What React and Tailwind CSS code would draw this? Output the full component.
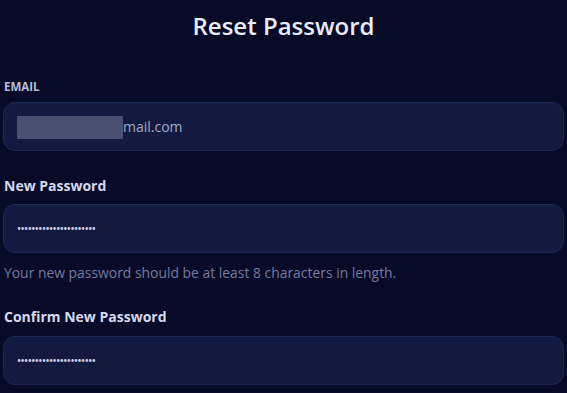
const font = { fontFamily: '"Open Sans", "Noto Sans", sans-serif' };

const Field = ({ children }) => (
    <div className="h-[49px] rounded-[12px] border border-[#1e2656] bg-[#141a3f] flex items-center px-[13px]">
        {children}
    </div>
);

const Dots = () => (
    <span
        className="text-[#c9cde6] text-[7px] tracking-[-0.5px] leading-none"
        style={{ fontFamily: 'Lato, sans-serif' }}
    >
        ••••••••••••••••••••••
    </span>
);

export default function App() {
    return (
        <div className="min-h-screen bg-[#070b27] px-[3px] pt-[10px]" style={font}>
            <h1 className="text-center text-[24px] leading-[32px] font-semibold text-[#e9ebf7]">
                Reset Password
            </h1>

            <label className="block mt-[38px] px-px text-[11.5px] leading-[14px] font-bold text-[#b9bfdc]">
                EMAIL
            </label>
            <div className="mt-[8px]">
                <Field>
                    <span className="w-[106px] h-[23px] bg-[#4a4f72] mt-[2px]" />
                    <span className="text-[14px] text-[#a3a9c7]">mail.com</span>
                </Field>
            </div>

            <label className="block mt-[26px] px-px text-[14px] leading-[18px] font-bold text-[#d5d9ee]">
                New Password
            </label>
            <div className="mt-[9px]">
                <Field>
                    <Dots />
                </Field>
            </div>
            <p className="mt-[12px] px-px text-[13.9px] leading-[16px] text-[#747b9e]">
                Your new password should be at least 8 characters in length.
            </p>

            <label className="block mt-[27px] px-px text-[14px] leading-[18px] font-bold text-[#d5d9ee]">
                Confirm New Password
            </label>
            <div className="mt-[10px]">
                <Field>
                    <Dots />
                </Field>
            </div>
        </div>
    );
}
